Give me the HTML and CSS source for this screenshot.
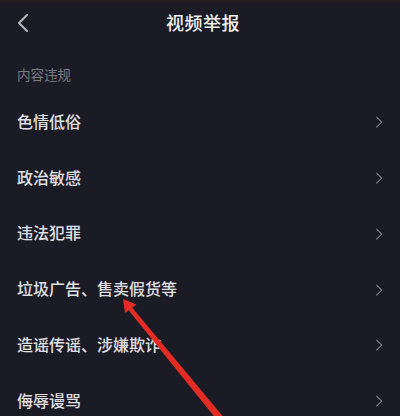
FILE: index.html
```html
<!DOCTYPE html>
<html lang="zh-CN">
<head>
<meta charset="UTF-8">
<meta name="viewport" content="width=device-width, initial-scale=1.0">
<title>视频举报</title>
<link rel="stylesheet" href="styles.css">
</head>
<body>

<div class="page">
  <div class="status-strip"></div>

  <header class="top-bar">
    <svg class="back-icon" width="14" height="20" viewBox="0 0 14 20">
      <path d="M11 2 L3 10 L11 18" fill="none" stroke="#b9b9c1" stroke-width="2" stroke-linecap="round" stroke-linejoin="round"/>
    </svg>
    <h1 class="title">视频举报</h1>
  </header>

  <div class="group-label">内容违规</div>

  <ul class="report-list">
    <li class="report-item"><span>色情低俗</span><span class="chevron"></span></li>
    <li class="report-item"><span>政治敏感</span><span class="chevron"></span></li>
    <li class="report-item"><span>违法犯罪</span><span class="chevron"></span></li>
    <li class="report-item"><span>垃圾广告、售卖假货等</span><span class="chevron"></span></li>
    <li class="report-item"><span>造谣传谣、涉嫌欺诈</span><span class="chevron"></span></li>
    <li class="report-item"><span>侮辱谩骂</span><span class="chevron"></span></li>
  </ul>

  <!-- red pointer drawn over the list -->
  <svg class="pointer" width="400" height="416" viewBox="0 0 400 416">
    <polygon points="126.4,307.4 129.6,304.6 223,416.5 217,420" fill="#e42c24"/>
    <polygon points="123,299 136.5,304.5 125,313" fill="#e42c24"/>
  </svg>
</div>

</body>
</html>
```

FILE: styles.css
```css
/* report page, dark theme */
body {
  margin: 0;
  padding: 0;
  background: #1b1b25;
  font-family: "Noto Sans CJK SC", "Noto Sans", sans-serif;
  color: #e2e2e6;
}

.page {
  position: relative;
  width: 400px;
  height: 416px;
  overflow: hidden;
  background: #1b1b25;
}

.status-strip {
  height: 2px;
  background: #2a1c24;
}

.top-bar {
  position: relative;
  height: 40px;
  display: flex;
  align-items: center;
  justify-content: center;
}

.back-icon {
  position: absolute;
  left: 16px;
  top: 11px;
}

.title {
  margin: 0 0 0 6px;
  font-size: 18px;
  font-weight: 500;
  color: #f0f0f2;
  letter-spacing: 0.5px;
}

.group-label {
  padding: 22px 17px 0;
  height: 20px;
  line-height: 20px;
  font-size: 13.5px;
  color: #7a7a82;
}

.report-list {
  list-style: none;
  margin: 10px 0 0;
  padding: 0;
}

.report-item {
  height: 55.8px;
  display: flex;
  align-items: center;
  justify-content: space-between;
  padding: 0 18px 0 17px;
  font-size: 16px;
  font-weight: 500;
  color: #e0e0e4;
}

.report-item span:first-child {
  margin-top: -2px;
}

.chevron {
  width: 6.5px;
  height: 6.5px;
  border-right: 1.7px solid #85858d;
  border-top: 1.7px solid #85858d;
  transform: rotate(45deg);
  margin-right: 2px;
}

.pointer {
  position: absolute;
  left: 0;
  top: 0;
}
```
